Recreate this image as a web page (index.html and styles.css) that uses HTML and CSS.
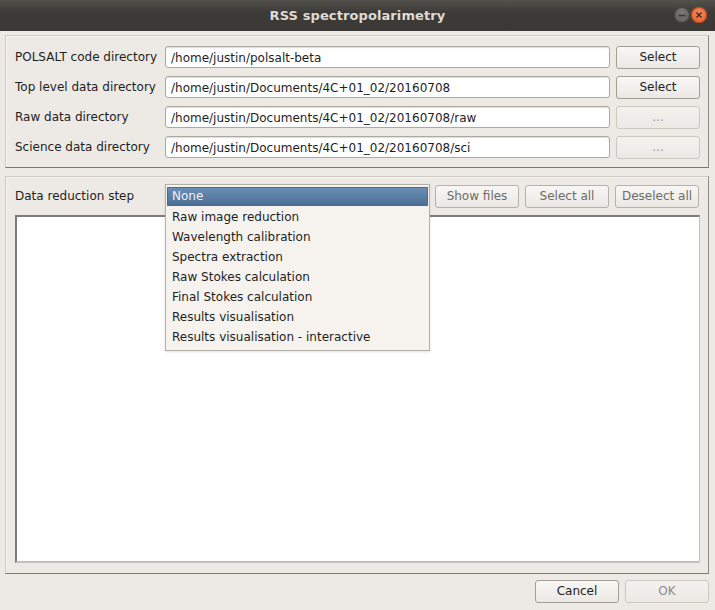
FILE: index.html
```html
<!DOCTYPE html>
<html>
<head>
<meta charset="utf-8">
<link rel="stylesheet" href="styles.css">
</head>
<body>
<div class="window">
  <div class="titlebar">
    <span class="title">RSS spectropolarimetry</span>
    <div class="wbtns">
      <span class="wbtn min"><svg width="16" height="16" viewBox="0 0 16 16"><path d="M4.5 8.5h7" stroke="#3a3936" stroke-width="1.6"/></svg></span>
      <span class="wbtn close"><svg width="16" height="16" viewBox="0 0 16 16"><path d="M5.5 5.5l5 5M10.5 5.5l-5 5" stroke="#4a2a1a" stroke-width="1.5"/></svg></span>
    </div>
  </div>
  <div class="content">
    <div class="frame dirs">
      <div class="lbl">POLSALT code directory</div>
      <div class="field">/home/justin/polsalt-beta</div>
      <div class="btn">Select</div>
      <div class="lbl">Top level data directory</div>
      <div class="field">/home/justin/Documents/4C+01_02/20160708</div>
      <div class="btn">Select</div>
      <div class="lbl">Raw data directory</div>
      <div class="field">/home/justin/Documents/4C+01_02/20160708/raw</div>
      <div class="btn disabled">...</div>
      <div class="lbl">Science data directory</div>
      <div class="field">/home/justin/Documents/4C+01_02/20160708/sci</div>
      <div class="btn disabled">...</div>
    </div>
    <div class="frame steps">
      <div class="steprow">
        <div class="lbl">Data reduction step</div>
        <div class="combo">
          <div class="popup">
            <div class="item sel">None</div>
            <div class="item">Raw image reduction</div>
            <div class="item">Wavelength calibration</div>
            <div class="item">Spectra extraction</div>
            <div class="item">Raw Stokes calculation</div>
            <div class="item">Final Stokes calculation</div>
            <div class="item">Results visualisation</div>
            <div class="item">Results visualisation - interactive</div>
          </div>
        </div>
        <div class="btn dim">Show files</div>
        <div class="btn dim">Select all</div>
        <div class="btn dim">Deselect all</div>
      </div>
      <div class="list"></div>
    </div>
    <div class="footer">
      <div class="btn">Cancel</div>
      <div class="btn disabled ok">OK</div>
    </div>
  </div>
</div>
</body>
</html>
```
FILE: styles.css
```css
html, body {
  margin: 0;
  padding: 0;
}
body {
  width: 715px;
  height: 610px;
  overflow: hidden;
  background: #edeae6;
  font-family: "DejaVu Sans", sans-serif;
  font-size: 12px;
  color: #1e1e1e;
}
.window {
  width: 715px;
  height: 610px;
  display: flex;
  flex-direction: column;
}
.titlebar {
  height: 31px;
  flex: none;
  background: linear-gradient(#52514c, #3c3b37 40%, #3a3935);
  display: flex;
  align-items: center;
  justify-content: center;
  position: relative;
}
.title {
  color: #dfdbd2;
  font-weight: bold;
  font-size: 13px;
  letter-spacing: 0.1px;
}
.wbtns {
  position: absolute;
  right: 8px;
  top: 7px;
  display: flex;
  gap: 1px;
}
.wbtn {
  width: 16px;
  height: 16px;
  border-radius: 50%;
  display: block;
}
.wbtn svg { display: block; }
.wbtn.min {
  background: radial-gradient(circle at 50% 35%, #7a7975, #5b5a56);
  box-shadow: inset 0 0 0 1px #3f3e3a;
}
.wbtn.close {
  background: radial-gradient(circle at 50% 35%, #f58a5a, #e2592a);
  box-shadow: inset 0 0 0 1px #b8461f;
}
.content {
  flex: 1;
  display: flex;
  flex-direction: column;
  padding: 4px 6px 0 5px;
}
.frame {
  border-top: 1px solid #cdc9c4;
  border-left: 1px solid #cdc9c4;
  border-right: 1px solid #8e8b87;
  border-bottom: 1px solid #7b7975;
  box-shadow: inset 1px 1px 0 #f7f5f2;
}
.dirs {
  display: grid;
  grid-template-columns: 150px 1fr 84px;
  grid-auto-rows: 22px;
  column-gap: 0;
  row-gap: 8px;
  padding: 10px 8px 9px 9px;
}
.dirs .field { margin-right: 6px; }
.lbl {
  line-height: 21px;
  padding-top: 1px;
  white-space: nowrap;
}
.field {
  background: #fff;
  border: 1px solid #aca8a2;
  border-radius: 3px;
  box-shadow: inset 0 1px 1px #e0ddd9;
  line-height: 20px;
  padding: 1px 5px 0 5px;
  box-sizing: border-box;
  white-space: nowrap;
  overflow: hidden;
}
.btn {
  box-sizing: border-box;
  height: 23px;
  border: 1px solid #a29e98;
  border-radius: 3px;
  background: linear-gradient(#f8f7f5, #ebe8e4);
  text-align: center;
  line-height: 21px;
  color: #222;
}
.btn.disabled {
  border-color: #cbc7c2;
  color: #a09d98;
  background: linear-gradient(#f3f1ee, #ece9e5);
}
.btn.ok {
  color: #8f8c88;
}
.btn.dim {
  color: #6e6c68;
  border-color: #b4b0aa;
}
.steps {
  margin-top: 8px;
  flex: 1;
  display: flex;
  flex-direction: column;
  padding: 8px 8px 10px 9px;
}
.steprow {
  display: flex;
  height: 23px;
  gap: 6px;
}
.steprow .lbl {
  width: 150px;
  margin-right: -6px;
  line-height: 22px;
  padding-top: 0;
}
.steprow .btn {
  width: 84px;
}
.combo {
  width: 264px;
  position: relative;
}
.popup {
  position: absolute;
  left: 0;
  top: -1px;
  width: 265px;
  box-sizing: border-box;
  background: #f6f3ef;
  border: 1px solid #b3afa9;
  box-shadow: 0 1px 2px rgba(0,0,0,0.12);
  padding: 2px 1px 3px 1px;
  z-index: 5;
}
.item {
  height: 20px;
  line-height: 20px;
  padding-left: 5px;
  white-space: nowrap;
}
.item.sel {
  height: 19px;
  line-height: 19px;
  margin-bottom: 1px;
  background: linear-gradient(#6b8fb6, #4c6d93);
  color: #eef2f6;
  border-radius: 1px;
  box-shadow: inset 0 0 0 1px #4a6a8f;
}
.list {
  margin-top: 7px;
  flex: 1;
  background: #fff;
  border-top: 2px solid #7e7c78;
  border-left: 2px solid #7e7c78;
  border-right: 1px solid #c4c1bc;
  border-bottom: 2px solid #c4c1bc;
}
.footer {
  height: 36px;
  flex: none;
  display: flex;
  justify-content: flex-end;
  align-items: flex-start;
  gap: 6px;
  padding-top: 6px;
  box-sizing: border-box;
}
.footer .btn {
  width: 84px;
  height: 23px;
}
```
